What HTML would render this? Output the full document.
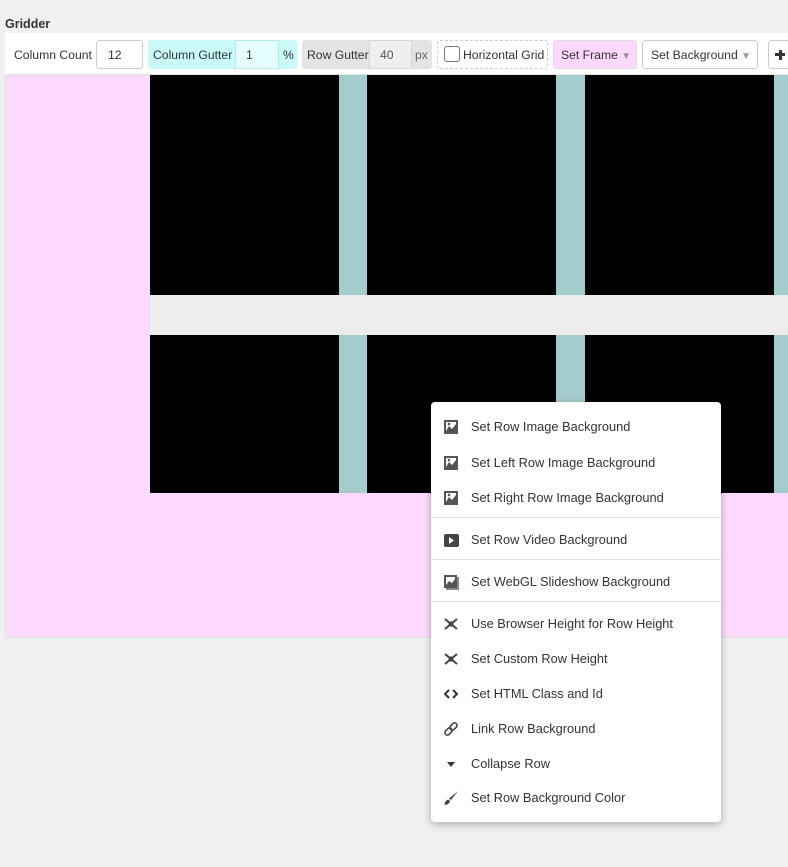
<!DOCTYPE html>
<html><head><style>
*{box-sizing:border-box;margin:0;padding:0}
body{width:788px;height:867px;background:#f0f0f0;font-family:"Liberation Sans",sans-serif;font-size:12.2px;color:#333;position:relative;overflow:hidden}
.a{position:absolute}
.box{position:absolute;border:1px solid #ccc;border-radius:3px;background:#fff}
.t{position:absolute;white-space:nowrap;line-height:14px}
.mi{position:absolute;left:0;right:0;height:20px}
.mi .t{left:40px;top:3px;font-size:12.8px;color:#333}
.mi svg{position:absolute;left:12px;top:2px}
.sep{position:absolute;left:0;right:0;height:1px;background:#e2e2e2}
</style></head><body>
<div class="t" style="left:5px;top:17px;font-weight:bold;font-size:12.5px;color:#333">Gridder</div>
<div class="a" style="left:5px;top:33px;width:783px;height:42px;background:#fff;border-bottom:1px solid #e2e2e2"></div>
<div class="t" style="left:14px;top:48px">Column Count</div>
<div class="box" style="left:96px;top:40px;width:47px;height:29px"></div>
<div class="t" style="left:108px;top:48px">12</div>
<div class="a" style="left:148px;top:40px;width:149px;height:29px;background:#c9f9f9;border-radius:3px"></div>
<div class="t" style="left:153px;top:48px">Column Gutter</div>
<div class="a" style="left:235px;top:40px;width:44px;height:29px;background:#e6fdfd;border:1px solid #b4eaea"></div>
<div class="t" style="left:246px;top:48px">1</div>
<div class="t" style="left:283px;top:48px">%</div>
<div class="a" style="left:302px;top:40px;width:130px;height:29px;background:#e4e4e4;border-radius:3px"></div>
<div class="t" style="left:307px;top:48px">Row Gutter</div>
<div class="a" style="left:369px;top:40px;width:43px;height:29px;background:#efefef;border:1px solid #d6d6d6"></div>
<div class="t" style="left:380px;top:48px;color:#555">40</div>
<div class="t" style="left:415px;top:48px;color:#666">px</div>
<div class="a" style="left:437px;top:40px;width:111px;height:29px;border:1px dashed #ccc;border-radius:3px"></div>
<div class="a" style="left:444px;top:46px;width:16px;height:16px;border:1px solid #777;border-radius:3px;background:#fff"></div>
<div class="t" style="left:463px;top:48px">Horizontal Grid</div>
<div class="a" style="left:553px;top:40px;width:84px;height:29px;background:#fdd9ff;border:1px solid #ddd;border-radius:3px"></div>
<div class="t" style="left:561px;top:48px">Set Frame <span style="color:#999;font-size:10px">▼</span></div>
<div class="box" style="left:642px;top:40px;width:116px;height:29px"></div>
<div class="t" style="left:651px;top:48px">Set Background <span style="color:#999;font-size:10px">▼</span></div>
<div class="box" style="left:768px;top:40px;width:30px;height:29px"></div>
<div class="a" style="left:775px;top:53px;width:10px;height:3px;background:#333"></div>
<div class="a" style="left:778.5px;top:49.5px;width:3px;height:10px;background:#333"></div>

<div class="a" style="left:5px;top:75px;width:790px;height:563px;background:#fdd9ff;border:1px solid #e0e0e0;border-top:none"></div>
<div class="a" style="left:150px;top:75px;width:638px;height:418px;background:#a5cccc"></div>
<div class="a" style="left:150px;top:295px;width:638px;height:40px;background:#ededed"></div>
<div class="a" style="left:150px;top:75px;width:189px;height:220px;background:#000"></div>
<div class="a" style="left:367px;top:75px;width:189px;height:220px;background:#000"></div>
<div class="a" style="left:585px;top:75px;width:189px;height:220px;background:#000"></div>
<div class="a" style="left:150px;top:335px;width:189px;height:158px;background:#000"></div>
<div class="a" style="left:367px;top:335px;width:189px;height:158px;background:#000"></div>
<div class="a" style="left:585px;top:335px;width:189px;height:158px;background:#000"></div>

<div class="a" style="left:431px;top:402px;width:290px;height:420px;background:#fff;border-radius:4px;box-shadow:0 2px 8px rgba(0,0,0,.3)">
<div class="mi" style="top:15px"><svg width="16" height="16"><rect x="1" y="1" width="14" height="14" fill="#555"/><rect x="3" y="3" width="10" height="9" fill="#fff"/><path d="M3 12 L6 7 L9 10 L13 5 L13 12Z" fill="#555"/><circle cx="6" cy="5" r="1.3" fill="#555"/></svg><div class="t">Set Row Image Background</div></div>
<div class="mi" style="top:51px"><svg width="16" height="16"><rect x="1" y="1" width="14" height="14" fill="#555"/><rect x="3" y="3" width="10" height="9" fill="#fff"/><path d="M3 12 L6 7 L9 10 L13 5 L13 12Z" fill="#555"/><circle cx="6" cy="5" r="1.3" fill="#555"/></svg><div class="t">Set Left Row Image Background</div></div>
<div class="mi" style="top:86px"><svg width="16" height="16"><rect x="1" y="1" width="14" height="14" fill="#555"/><rect x="3" y="3" width="10" height="9" fill="#fff"/><path d="M3 12 L6 7 L9 10 L13 5 L13 12Z" fill="#555"/><circle cx="6" cy="5" r="1.3" fill="#555"/></svg><div class="t">Set Right Row Image Background</div></div>
<div class="sep" style="top:115px"></div>
<div class="mi" style="top:128px"><svg width="16" height="16"><rect x="1" y="2" width="15" height="13" rx="2" fill="#444"/><path d="M6 5 L11 8.5 L6 12Z" fill="#fff"/></svg><div class="t">Set Row Video Background</div></div>
<div class="sep" style="top:157px"></div>
<div class="mi" style="top:170px"><svg width="17" height="17"><rect x="3" y="3" width="13" height="13" fill="#888"/><rect x="1" y="1" width="13" height="13" fill="#555"/><rect x="3" y="3" width="9" height="8" fill="#fff"/><path d="M3 11 L6 7 L9 9 L12 5 L12 11Z" fill="#555"/></svg><div class="t">Set WebGL Slideshow Background</div></div>
<div class="sep" style="top:199px"></div>
<div class="mi" style="top:212px"><svg width="16" height="16"><path d="M2 3 L14 13 M14 3 L2 13" stroke="#444" stroke-width="2"/><rect x="5.5" y="5.5" width="5" height="5" fill="#444"/></svg><div class="t">Use Browser Height for Row Height</div></div>
<div class="mi" style="top:247px"><svg width="16" height="16"><path d="M2 3 L14 13 M14 3 L2 13" stroke="#444" stroke-width="2"/><rect x="5.5" y="5.5" width="5" height="5" fill="#444"/></svg><div class="t">Set Custom Row Height</div></div>
<div class="mi" style="top:282px"><svg width="16" height="16"><path d="M6 4 L2 8 L6 12 M10 4 L14 8 L10 12" stroke="#333" stroke-width="2" fill="none"/></svg><div class="t">Set HTML Class and Id</div></div>
<div class="mi" style="top:317px"><svg width="16" height="16"><rect x="1.5" y="8" width="8" height="5" rx="2.5" transform="rotate(-45 5.5 10.5)" stroke="#444" stroke-width="1.6" fill="none"/><rect x="6.5" y="3" width="8" height="5" rx="2.5" transform="rotate(-45 10.5 5.5)" stroke="#444" stroke-width="1.6" fill="none"/></svg><div class="t">Link Row Background</div></div>
<div class="mi" style="top:352px"><svg width="16" height="16"><path d="M4 6 L12 6 L8 11Z" fill="#333"/></svg><div class="t">Collapse Row</div></div>
<div class="mi" style="top:386px"><svg width="16" height="16"><path d="M15 1 L8 10 L6 8.5 Z" fill="#444"/><path d="M5.5 9.5 Q2 10 1.5 15 Q6.5 14.5 7 11Z" fill="#444"/></svg><div class="t">Set Row Background Color</div></div>
</div>
</body></html>
